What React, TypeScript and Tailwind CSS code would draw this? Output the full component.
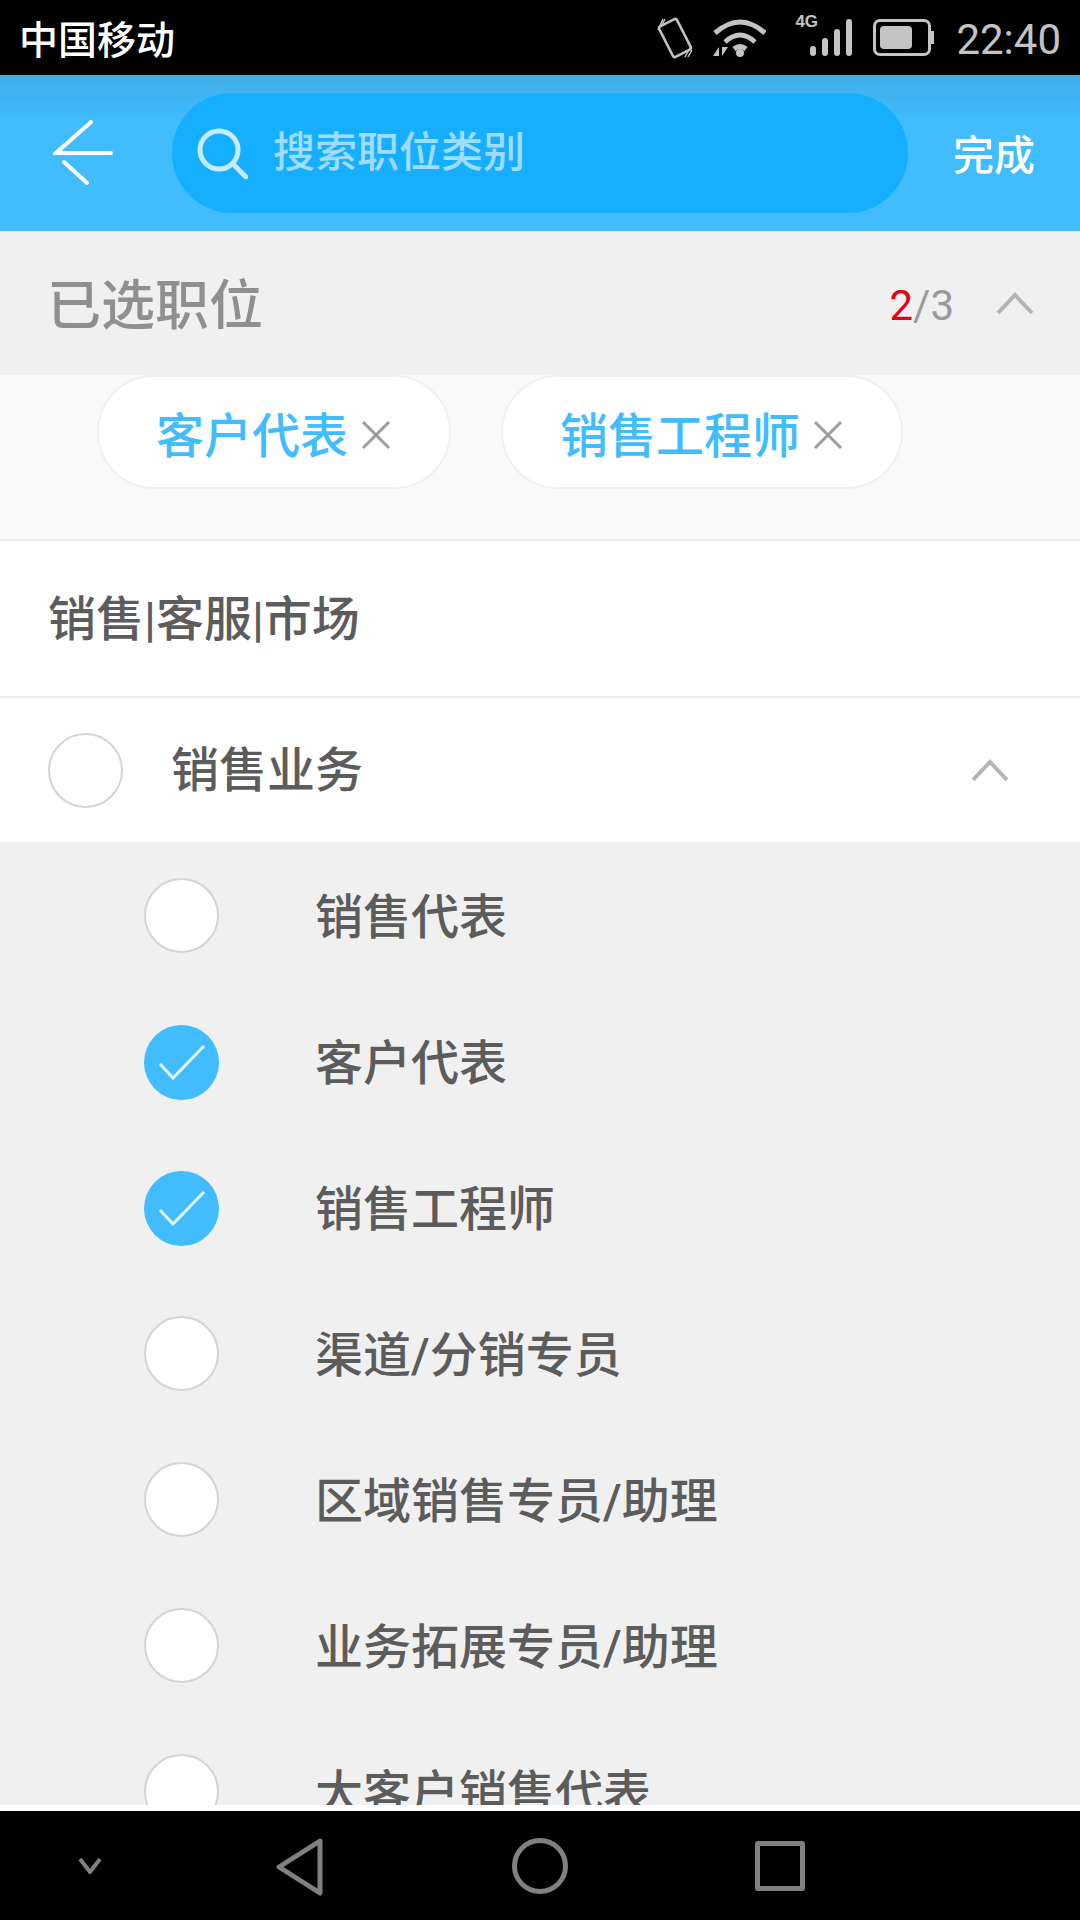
import React from 'react';

const font = { fontFamily: 'Roboto, "Noto Sans CJK SC", sans-serif' };

const jobs = [
    { name: '销售代表', checked: false },
    { name: '客户代表', checked: true },
    { name: '销售工程师', checked: true },
    { name: '渠道/分销专员', checked: false },
    { name: '区域销售专员/助理', checked: false },
    { name: '业务拓展专员/助理', checked: false },
    { name: '大客户销售代表', checked: false },
];

const Chevron = ({ className }: { className: string }) => (
    <svg viewBox="0 0 38 24" className={className} fill="none" stroke="#b4b4b4" strokeWidth="4">
        <path d="M2 22 L19 4 L36 22" />
    </svg>
);

const Cross = () => (
    <svg viewBox="0 0 32 32" className="w-8 h-8" fill="none" stroke="#9c9c9c" strokeWidth="3">
        <path d="M3 3 L29 29 M29 3 L3 29" />
    </svg>
);

const Circle = ({ checked }: { checked?: boolean }) =>
    checked ? (
        <div className="w-[75px] h-[75px] mt-[2px] rounded-full bg-[#40bcff] flex items-center justify-center shrink-0">
            <svg viewBox="0 0 48 36" className="w-12 h-9" fill="none" stroke="#e6f6ff" strokeWidth="3">
                <path d="M2 20 L15 34 L46 2" />
            </svg>
        </div>
    ) : (
        <div className="w-[75px] h-[75px] rounded-full bg-white border-2 border-[#d4d4d4] shrink-0" />
    );

const Chip = ({ label, className }: { label: string; className: string }) => (
    <div className={`h-[114px] rounded-full bg-white border-2 border-[#f0f0f0] flex items-center ${className}`}>
        <span className="mt-[10px] text-[48px] leading-none font-medium text-[#40bcff]">{label}</span>
        <span className="ml-3 mt-[5px]"><Cross /></span>
    </div>
);

const StatusBar = () => (
    <div className="h-[75px] bg-black flex items-center shrink-0 pl-[19px] pr-[19px]">
        <span className="mt-[7px] text-[39px] leading-none font-medium text-white">中国移动</span>
        <div className="ml-auto flex items-center">
            <svg viewBox="0 0 36 42" className="w-9 h-[42px]" fill="none" stroke="#c4c4c4" strokeWidth="2.5">
                <rect x="8" y="4" width="20" height="34" rx="2" transform="rotate(-27 18 21)" />
                <path d="M1 13 L6 2 M5 8 L8 2 M28 40 L34 29 M31 40 L35 33" strokeWidth="1.5" />
            </svg>
            <svg viewBox="0 0 54 40" className="w-[54px] h-10 ml-[19px]" fill="none" stroke="#c4c4c4" strokeWidth="5">
                <path d="M3 15 Q28 -7 53 15 M13 24 Q28 10 43 24 M22 31 Q28 26 34 31" />
                <circle cx="28" cy="35" r="4" fill="#c4c4c4" stroke="none" />
                <path d="M7 29 V38 H1 Z M10 38 V29 H16 Z" fill="#c4c4c4" stroke="none" />
            </svg>
            <div className="relative ml-[44px] w-[42px] h-[37px] flex items-end gap-[6px]">
                <span className="absolute left-[-15px] top-[-6px] text-[17px] leading-none font-bold text-[#c4c4c4]" style={{ fontFamily: '"Liberation Sans", sans-serif' }}>4G</span>
                <div className="w-[6px] h-[10px] bg-[#c4c4c4] rounded-sm" />
                <div className="w-[6px] h-[18px] bg-[#c4c4c4] rounded-sm" />
                <div className="w-[6px] h-[27px] bg-[#c4c4c4] rounded-sm" />
                <div className="w-[6px] h-[37px] bg-[#c4c4c4] rounded-sm" />
            </div>
            <div className="ml-[21px] w-[58px] h-[37px] border-[3px] border-[#c4c4c4] rounded-[7px] p-[4px] relative">
                <div className="w-[32px] h-full bg-[#c4c4c4] rounded-sm" />
                <div className="absolute right-[-6px] top-[9px] w-[3px] h-[13px] bg-[#c4c4c4]" />
            </div>
            <span className="ml-[25px] mt-[5px] text-[42px] leading-none text-[#c4c4c4]">22:40</span>
        </div>
    </div>
);

const Header = () => (
    <div className="h-[156px] bg-gradient-to-b from-[#3fade6] via-[#40bcff] to-[#40bcff] from-0% via-30% flex items-center shrink-0 pl-[53px]">
        <svg viewBox="0 0 62 66" className="w-[62px] h-[66px] shrink-0" fill="none" stroke="#fff" strokeLinecap="round" strokeWidth="4">
            <path d="M38 2 L3 33 L58 33 M11 42 L34 63" />
        </svg>
        <div className="ml-[57px] w-[736px] h-[120px] rounded-full bg-[#16afff] flex items-center pl-[24px]">
            <svg viewBox="0 0 52 52" className="w-[52px] h-[52px]" fill="none" stroke="#c6ebff" strokeWidth="5">
                <circle cx="23" cy="23" r="19" />
                <path d="M37 37 L50 50" strokeLinecap="round" />
            </svg>
            <span className="ml-[25px] text-[42px] leading-none font-medium text-[#9fdcff]">搜索职位类别</span>
        </div>
        <span className="ml-[45px] mt-[7px] text-[41px] leading-none font-medium text-white">完成</span>
    </div>
);

const App = () => {
    return (
        <div className="w-[1080px] h-[1920px] flex flex-col overflow-hidden bg-white" style={font}>
            <StatusBar />
            <Header />

            <div className="h-[144px] bg-[#f0f0f0] flex items-center pl-[47px] pr-[46px] shrink-0">
                <span className="mt-[7px] text-[54px] leading-none font-medium text-[#8f8f8f]">已选职位</span>
                <span className="ml-auto mt-[6px] text-[42px] leading-none text-[#9a9a9a]">
                    <span className="text-[#e60012]">2</span>/3
                </span>
                <Chevron className="ml-[42px] w-[38px] h-6" />
            </div>

            <div className="h-[166px] bg-[#f9f9f9] border-b-2 border-[#ececec] flex items-start gap-[50px] pl-[97px] shrink-0">
                <Chip label="客户代表" className="w-[354px] pl-[57px]" />
                <Chip label="销售工程师" className="w-[402px] pl-[57px]" />
            </div>

            <div className="h-[157px] flex items-center pl-[48px] border-b-2 border-[#ececec] shrink-0">
                <span className="mt-[2px] text-[48px] leading-none font-medium text-[#5c5c5c]">销售|客服|市场</span>
            </div>

            <div className="h-[144px] flex items-center pl-[48px] pr-[71px] shrink-0">
                <Circle />
                <span className="ml-[48px] mt-[2px] text-[48px] leading-none font-medium text-[#5c5c5c]">销售业务</span>
                <Chevron className="ml-auto w-[38px] h-6" />
            </div>

            <div className="h-[963px] bg-[#f0f0f0] overflow-hidden shrink-0">
                {jobs.map((job) => (
                    <div key={job.name} className="h-[146px] flex items-center pl-[144px]">
                        <Circle checked={job.checked} />
                        <span className="ml-[96px] mt-[5px] text-[48px] leading-none font-medium text-[#5c5c5c]">{job.name}</span>
                    </div>
                ))}
            </div>

            <div className="h-[6px] bg-white shrink-0" />

            <div className="flex-1 bg-black relative">
                <svg viewBox="0 0 26 16" className="absolute left-[77px] top-[47px] w-[26px] h-4" fill="none" stroke="#808080" strokeWidth="4">
                    <path d="M3 1 L13 14 L23 1" />
                </svg>
                <svg viewBox="0 0 48 58" className="absolute left-[276px] top-[27px] w-12 h-[58px]" fill="none" stroke="#808080" strokeWidth="5" strokeLinejoin="round">
                    <path d="M44 3 L3 29 L44 55 Z" />
                </svg>
                <div className="absolute left-[512px] top-[27px] w-[56px] h-[56px] rounded-full border-[5px] border-[#808080]" />
                <div className="absolute left-[755px] top-[30px] w-[50px] h-[50px] rounded-[3px] border-[5px] border-[#808080]" />
            </div>
        </div>
    );
};

export default App;
